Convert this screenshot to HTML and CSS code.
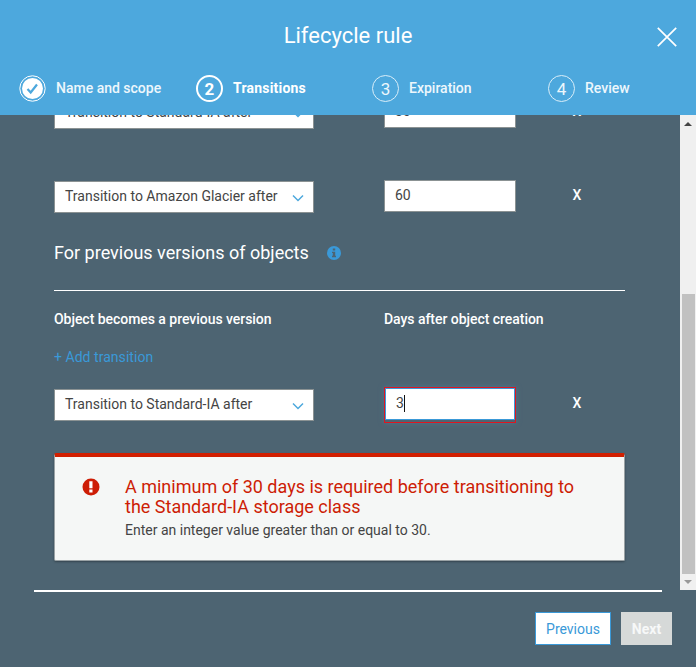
FILE: index.html
```html
<!DOCTYPE html>
<html lang="en">
<head>
<meta charset="utf-8">
<title>Lifecycle rule</title>
<link rel="stylesheet" href="styles.css">
</head>
<body>
<div class="dialog">
  <header class="header">
    <div class="title-bar">
      <h1 class="title">Lifecycle rule</h1>
      <svg class="close" viewBox="0 0 20 20"><path d="M.8.8 19.2 19.2M19.2.8.8 19.2"/></svg>
    </div>
    <nav class="steps">
      <div class="step">
        <svg class="bullet" viewBox="0 0 27 27"><circle class="ring" cx="13.5" cy="13.5" r="12.7"/><circle class="disc" cx="13.5" cy="13.5" r="10.5"/><path class="tick" d="m8.5 14 3.2 3.5 6.3-8"/></svg>
        <span class="step-name">Name and scope</span>
      </div>
      <div class="step current">
        <span class="bullet number">2</span>
        <span class="step-name">Transitions</span>
      </div>
      <div class="step">
        <span class="bullet number">3</span>
        <span class="step-name">Expiration</span>
      </div>
      <div class="step">
        <span class="bullet number">4</span>
        <span class="step-name">Review</span>
      </div>
    </nav>
  </header>

  <div class="scroller">
    <main class="content">
      <div class="row first">
        <div class="select"><span>Transition to Standard-IA after</span><svg class="chevron" viewBox="0 0 12 8"><path d="m1 1.5 5 5 5-5"/></svg></div>
        <div class="input">30</div>
        <span class="remove">X</span>
      </div>
      <div class="row second">
        <div class="select"><span>Transition to Amazon Glacier after</span><svg class="chevron" viewBox="0 0 12 8"><path d="m1 1.5 5 5 5-5"/></svg></div>
        <div class="input">60</div>
        <span class="remove">X</span>
      </div>
      <h2 class="section"><span>For previous versions of objects</span>
        <svg class="info" viewBox="0 0 14 14"><circle cx="7" cy="7" r="7"/><path d="M5.8 2.5h2.4v2H5.8zM5 5.7h3.2v4.1H9v1.4H5V9.8h.8V7.1H5z"/></svg>
      </h2>
      <div class="labels"><span>Object becomes a previous version</span><span>Days after object creation</span></div>
      <a class="add">+ Add transition</a>
      <div class="row third">
        <div class="select"><span>Transition to Standard-IA after</span><svg class="chevron" viewBox="0 0 12 8"><path d="m1 1.5 5 5 5-5"/></svg></div>
        <div class="invalid"><div class="input focused">3<i class="caret"></i></div></div>
        <span class="remove">X</span>
      </div>
      <section class="alert">
        <svg class="alert-icon" viewBox="0 0 18 18"><circle cx="9" cy="9" r="8.5"/><path d="M7.3 3.2h3.2v7H7.3zM7.3 11.6h3.2v2.9H7.3z"/></svg>
        <div>
          <div class="alert-title">A minimum of 30 days is required before transitioning to<br>the Standard-IA storage class</div>
          <div class="alert-text">Enter an integer value greater than or equal to 30.</div>
        </div>
      </section>
    </main>
    <div class="scrollbar">
      <svg class="arrow up" viewBox="0 0 16 17"><path d="M4 11h8L8 7z"/></svg>
      <div class="thumb"></div>
      <svg class="arrow down" viewBox="0 0 16 16"><path d="M4 6h8l-4 4z"/></svg>
    </div>
  </div>

  <footer class="footer">
    <div class="rule"></div>
    <div class="actions">
      <div class="button previous">Previous</div>
      <div class="button next">Next</div>
    </div>
  </footer>
</div>
</body>
</html>
```
FILE: styles.css
```css
* { box-sizing: border-box; }

body {
  margin: 0;
  font: 14px/20px Roboto, "Liberation Sans", sans-serif;
  color: #444;
}

h1, h2 { margin: 0; font-weight: 400; }
svg { display: block; flex: none; }
span { white-space: nowrap; }

.dialog {
  display: flex;
  flex-direction: column;
  width: 696px;
  height: 667px;
  overflow: hidden;
  background: #4d6472;
}

/* Header */
.header { height: 115px; background: #4da8dd; color: #fff; flex: none; }
.title-bar { display: grid; grid-template-columns: 1fr auto 1fr; align-items: center; height: 75px; }
.title { grid-column: 2; font-size: 22px; line-height: 30px; margin-top: -4px; }
.close { width: 20px; height: 20px; justify-self: end; margin: -1px 19px 0 0; }
.close path { stroke: #fff; stroke-width: 1.7; fill: none; }
.steps { display: grid; grid-template-columns: 177px 176px 176px 1fr; padding-left: 19px; }
.step { display: flex; align-items: center; gap: 10px; height: 27px; font-weight: 500; color: #edf7fc; }
.step-name { margin-top: -1px; }
.bullet { width: 27px; height: 27px; flex: none; }
.number { display: grid; place-items: center; border: 1px solid #d9eef9; border-radius: 50%; font-size: 17px; font-weight: 400; padding-top: 1px; }
.current { font-weight: 700; letter-spacing: .2px; color: #fff; }
.current .number { border: 2px solid #fff; font-weight: 700; letter-spacing: 0; }
.ring { fill: none; stroke: #fff; }
.disc { fill: #fff; }
.tick { fill: none; stroke: #4da8dd; stroke-width: 2.2; }

/* Scrolling form */
.scroller { display: flex; height: 475px; overflow: hidden; flex: none; }
.content { width: 680px; padding: 0 55px 0 54px; display: flex; flex-direction: column; }
.row { display: grid; grid-template-columns: 330px 132px 1fr; align-items: start; height: 32px; flex: none; }
.first { margin-top: -18px; }
.second { margin-top: 52px; }
.select {
  display: flex; justify-content: space-between; align-items: center;
  width: 260px; height: 32px; padding: 0 9px 2px 10px;
  border: 1px solid #8b9293; background: #fff;
}
.chevron { width: 12px; height: 8px; margin-top: 3px; }
.chevron path { fill: none; stroke: #4da8dd; stroke-width: 1.5; }
.input { display: flex; align-items: center; width: 132px; height: 32px; margin-top: -1px; padding: 0 10px 2px; border: 1px solid #8b9293; background: #fff; }
.remove { width: 12px; margin: 4px 0 0 55px; text-align: center; color: #fff; font-weight: 500; }
.section { display: flex; align-items: center; gap: 18px; height: 78px; border-bottom: 1px solid #fff; padding-top: 2px; font-size: 18px; color: #fff; flex: none; }
.info { width: 14px; height: 14px; }
.info circle { fill: #3a99d8; }
.info path { fill: #4d6472; }
.labels { display: grid; grid-template-columns: 330px 1fr; height: 20px; margin-top: 18px; color: #fff; font-weight: 500; letter-spacing: -.04px; }
.add { height: 20px; margin-top: 18px; color: #3a99d8; letter-spacing: .04px; }
.third { margin-top: 22px; }
.invalid { width: 132px; height: 36px; margin-top: -2px; border: 1px solid #e0151f; box-shadow: 0 0 5px #4c7590; }
.focused { width: 130px; height: 32px; margin: 0; border-color: #3a99d8; }
.caret { width: 1px; height: 17px; background: #111; }

.alert { display: flex; height: 108px; margin-top: 32px; padding: 20px 27px 0; border: 1px solid #9aa2a5; border-top: 4px solid #d11f00; border-radius: 2px; background: #f5f7f6; box-shadow: 0 1px 2px #35454f; flex: none; }
.alert-icon { width: 18px; height: 18px; margin: 1px 25px 0 0; }
.alert-icon circle { fill: #cd1d05; }
.alert-icon path { fill: #fff; }
.alert-title { font-size: 18px; color: #cd1d05; white-space: nowrap; }
.alert-text { margin-top: 3px; }

.scrollbar { width: 16px; background: #f0f0f0; display: flex; flex-direction: column; }
.arrow { width: 16px; }
.up { height: 17px; margin-bottom: 162px; fill: #444; }
.down { height: 16px; fill: #999; }
.thumb { height: 280px; margin: 0 1px 0 2px; background: #c1c1c1; }

/* Footer */
.footer { padding: 0 24px 0 34px; }
.rule { height: 2px; margin-right: 10px; background: #fff; }
.actions { display: flex; justify-content: flex-end; gap: 10px; margin-top: 20px; }
.button { display: flex; align-items: center; justify-content: center; height: 33px; }
.previous { width: 76px; border: 1px solid #3a99d8; background: #fff; color: #3a99d8; }
.next { width: 51px; background: #d6d9d8; color: #f7f8f8; font-weight: 700; }
```
